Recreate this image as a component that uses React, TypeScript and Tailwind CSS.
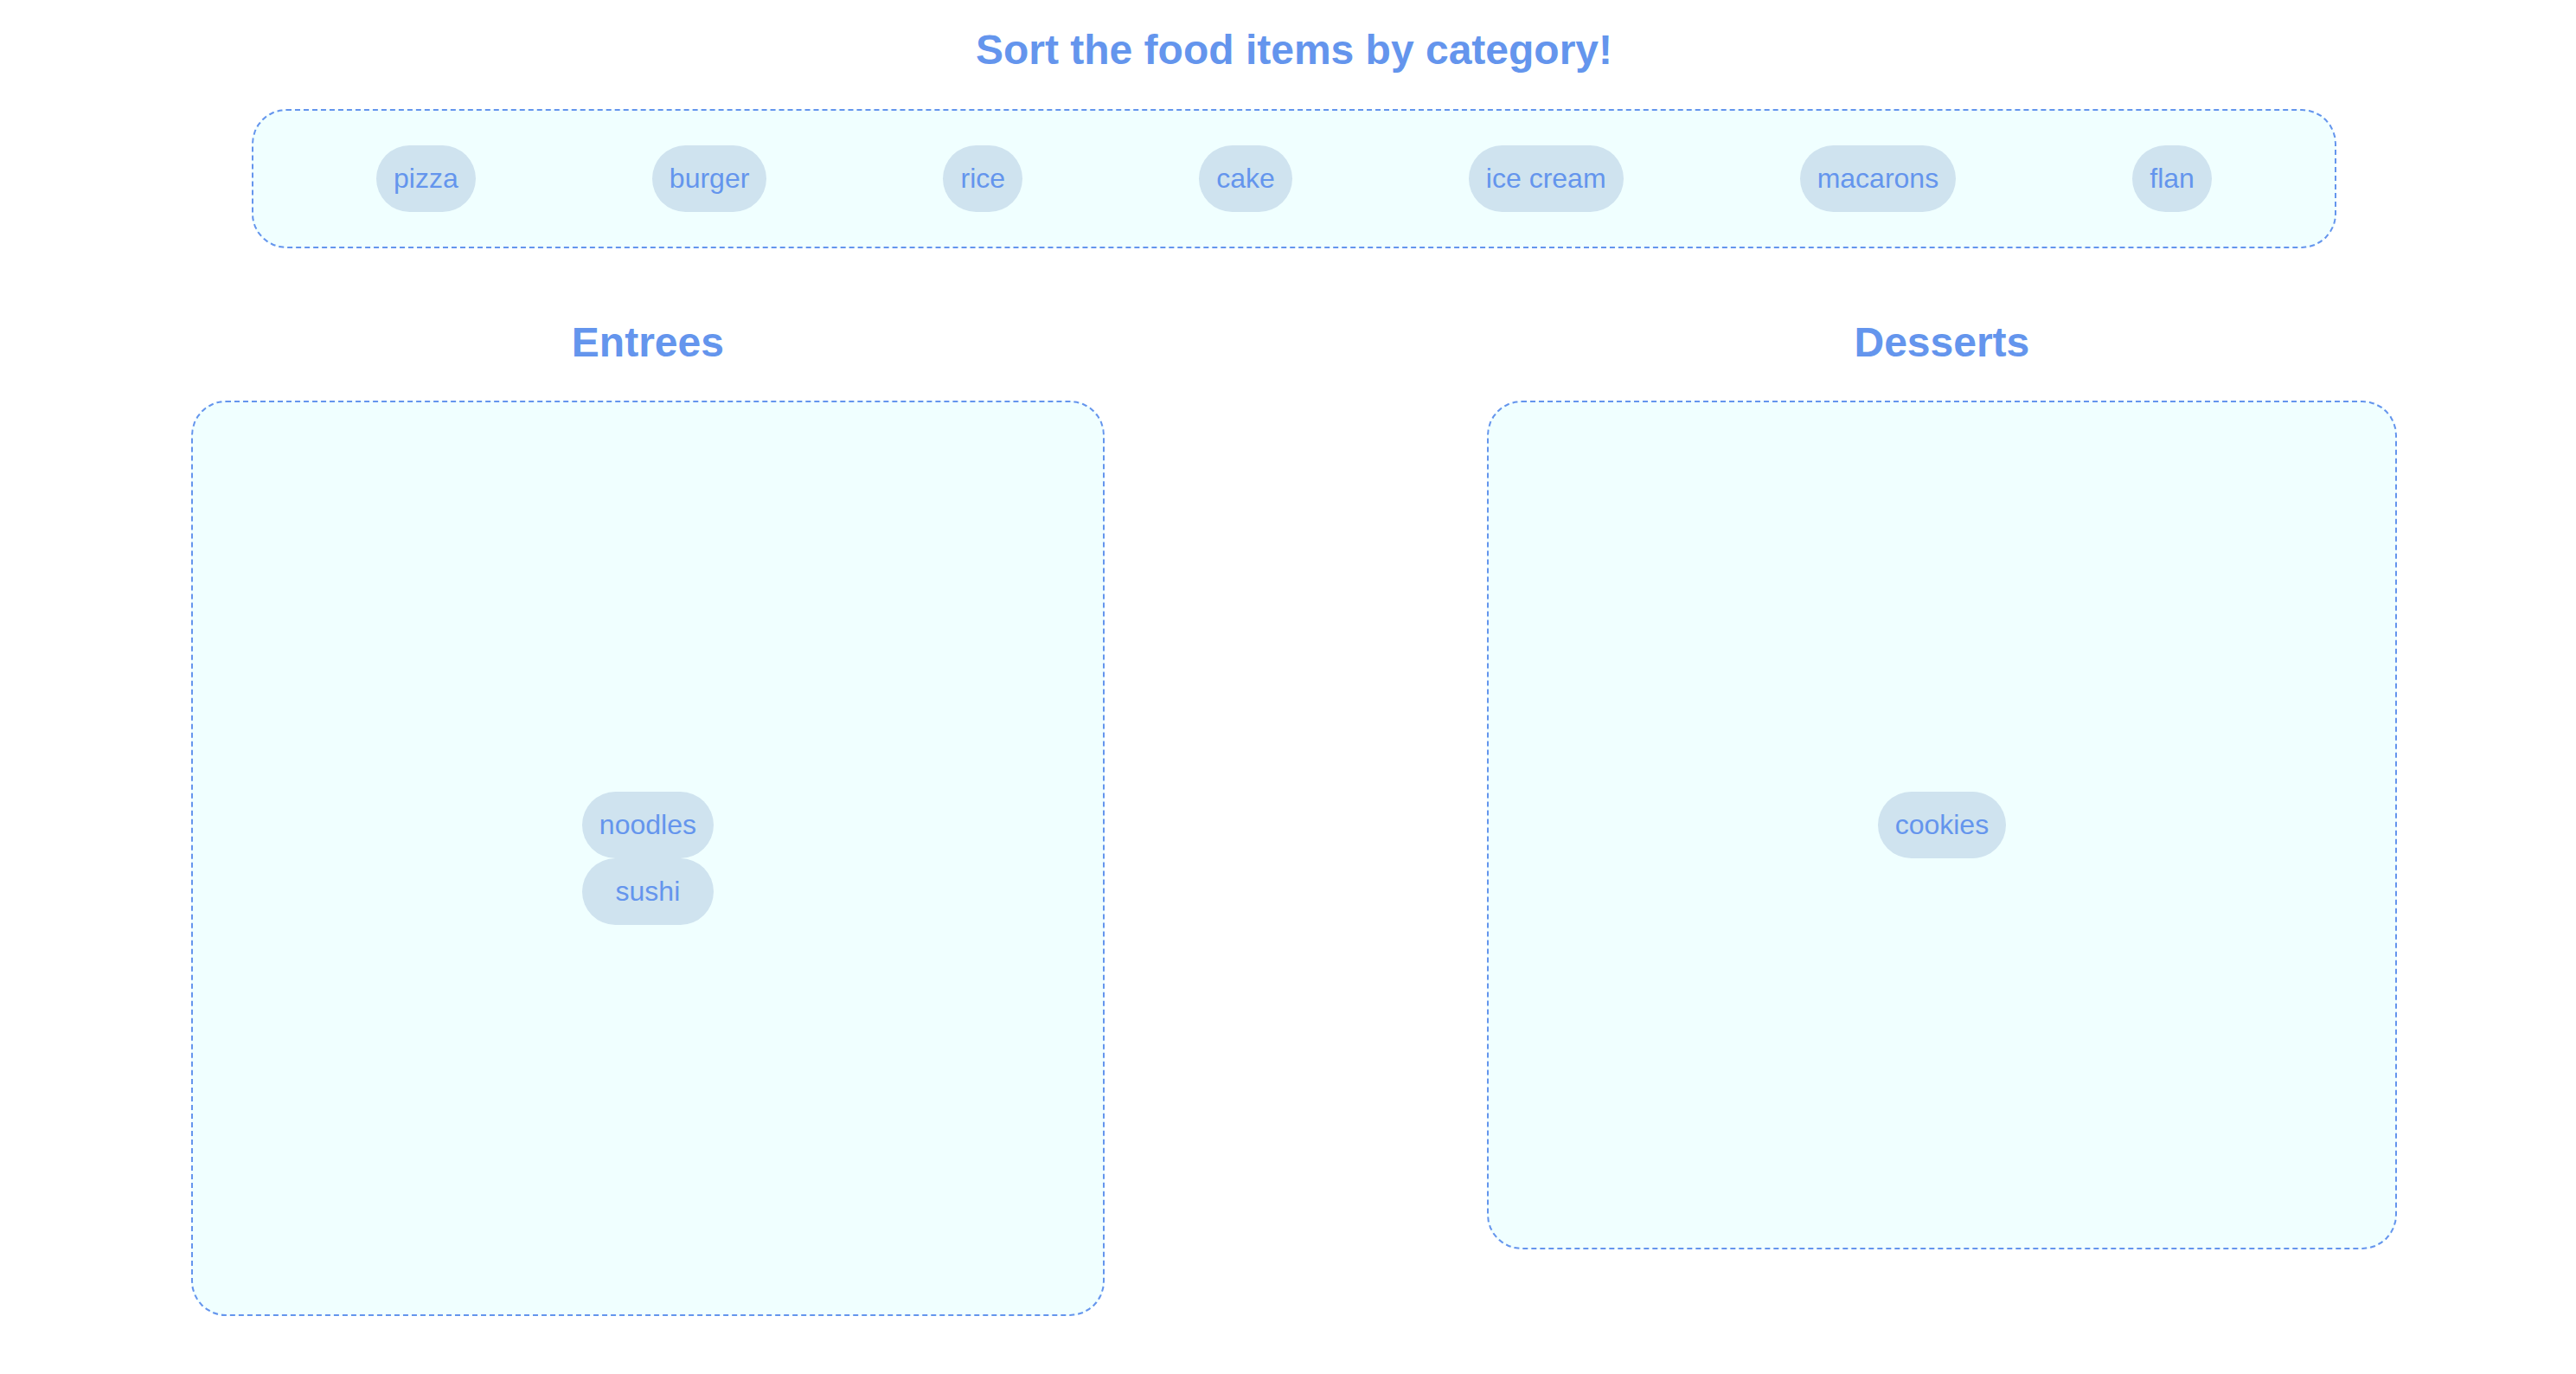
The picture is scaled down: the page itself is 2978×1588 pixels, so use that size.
import React from "react";

const bankItems = ["pizza", "burger", "rice", "cake", "ice cream", "macarons", "flan"];

function Chip({ label }: { label: string }) {
  return (
    <div className="rounded-full bg-[#cfe3ef] px-[20px] py-[20px] text-center text-[32px] leading-[36.8px] text-[#6495ED]">
      {label}
    </div>
  );
}

function Category({ title, items }: { title: string; items: string[] }) {
  return (
    <div className="flex flex-col items-center">
      <h2 className="text-[48px] font-bold leading-[55.2px] text-[#6495ED]">{title}</h2>
      <div className="mt-[40px] flex flex-col items-stretch rounded-[40px] border-2 border-dashed border-[#6495ED] bg-[#f0ffff] p-[450px]">
        {items.map((it) => (
          <Chip key={it} label={it} />
        ))}
      </div>
    </div>
  );
}

export default function App() {
  return (
    <div
      className="min-h-[1588px] w-full overflow-hidden bg-white"
      style={{ fontFamily: '"Liberation Sans", Arial, sans-serif' }}
    >
      <div className="w-[2992px] pt-[30px] pb-[60px]">
        <h1 className="text-center text-[48px] font-bold leading-[55.2px] text-[#6495ED]">
          Sort the food items by category!
        </h1>
        <div className="mx-auto mt-[41px] flex w-[2410px] items-center justify-around rounded-[40px] border-2 border-dashed border-[#6495ED] bg-[#f0ffff] p-[40px]">
          {bankItems.map((it) => (
            <Chip key={it} label={it} />
          ))}
        </div>
        <div className="mt-[81px] flex items-start justify-around">
          <Category title="Entrees" items={["noodles", "sushi"]} />
          <Category title="Desserts" items={["cookies"]} />
        </div>
      </div>
    </div>
  );
}
